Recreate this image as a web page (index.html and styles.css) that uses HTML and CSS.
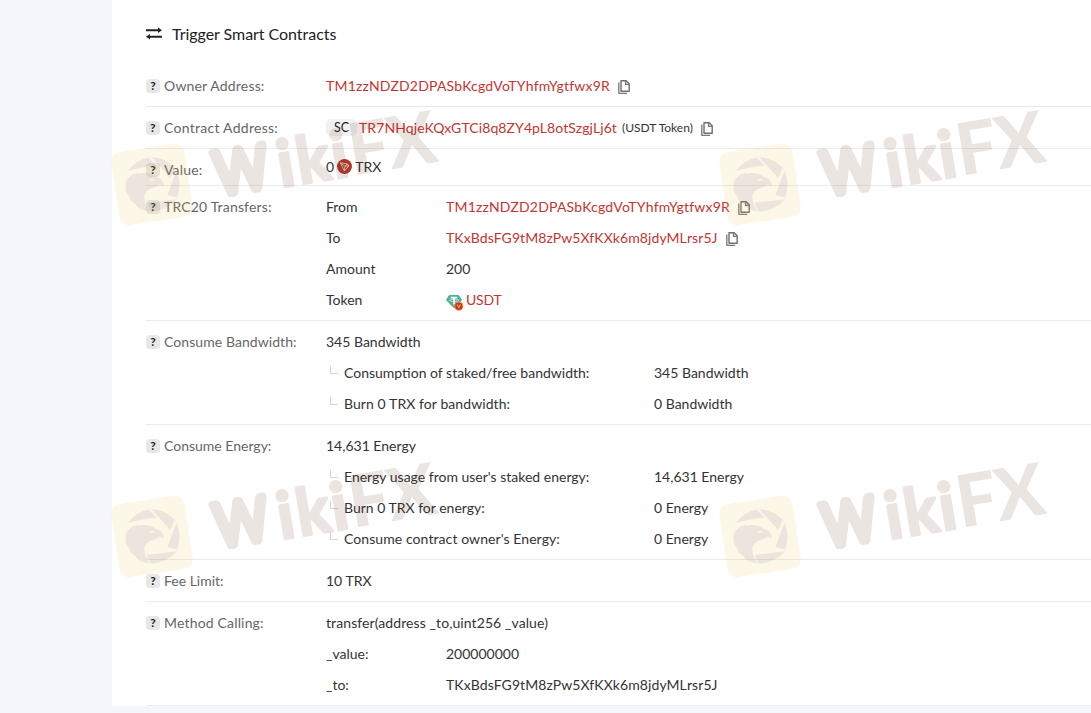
FILE: index.html
```
<!DOCTYPE html>
<html lang="en">
<head>
    <meta charset="UTF-8">
    <meta name="viewport" content="width=device-width, initial-scale=1.0">
    <title>Trigger Smart Contracts</title>
    <link rel="stylesheet" href="styles.css">
</head>
<body>
    <svg class="defs" width="0" height="0">
        <symbol id="copy" viewBox="0 0 12 14">
            <path d="M3 .8h5.2l3 3v7.4H3z" fill="none" stroke="#707070" stroke-width="1.4" stroke-linejoin="round"/>
            <path d="M7.6 .8v3.6h3.6M.8 2.6v10.7h8.4" fill="none" stroke="#777" stroke-width="1.3" stroke-linejoin="round"/>
        </symbol>
    </svg>

    <div class="card">
        <div class="title">
            <svg width="16" height="13" viewBox="0 0 16 13">
                <path d="M0 3.2h13M3 9.8h13" stroke="#222" stroke-width="2"/>
                <path d="M12 .4L16 3.2l-4 2.8zM4 7L0 9.8l4 2.8z" fill="#222"/>
            </svg>
            <span>Trigger Smart Contracts</span>
        </div>

        <div class="row">
            <div class="label"><i>?</i>Owner Address:</div>
            <div class="content">
                <div class="line"><a class="wide">TM1zzNDZD2DPASbKcgdVoTYhfmYgtfwx9R</a><svg class="copy"><use href="#copy"/></svg></div>
            </div>
        </div>

        <div class="row">
            <div class="label contract"><i>?</i>Contract Address:</div>
            <div class="content">
                <div class="line"><span class="tag">SC</span><a>TR7NHqjeKQxGTCi8q8ZY4pL8otSzgjLj6t</a><small>(USDT Token)</small><svg class="copy"><use href="#copy"/></svg></div>
            </div>
        </div>

        <div class="row value">
            <div class="label"><i>?</i>Value:</div>
            <div class="content">
                <div class="line">0
                    <svg class="trx" width="15" height="15" viewBox="0 0 15 15">
                        <circle cx="7.5" cy="7.5" r="7.5" fill="#b0382b"/>
                        <path d="M3.4 3.8l6.6 1.1 1.9 1.8-4.5 5.4zM3.4 3.8l4.5 3.5-.5 4.8M7.9 7.3l2.1-2.4M7.9 7.3l4-.6" fill="none" stroke="#f3d5cf" stroke-width=".8"/>
                    </svg>
                    TRX</div>
            </div>
        </div>

        <div class="row">
            <div class="label"><i>?</i>TRC20 Transfers:</div>
            <div class="content">
                <div class="line"><span class="key">From</span><a class="wide">TM1zzNDZD2DPASbKcgdVoTYhfmYgtfwx9R</a><svg class="copy"><use href="#copy"/></svg></div>
                <div class="line"><span class="key">To</span><a>TKxBdsFG9tM8zPw5XfKXk6m8jdyMLrsr5J</a><svg class="copy"><use href="#copy"/></svg></div>
                <div class="line"><span class="key">Amount</span>200</div>
                <div class="line"><span class="key">Token</span>
                    <svg class="usdt" width="18" height="18" viewBox="0 0 18 18">
                        <path d="M3.2 2.5h9.4l2.9 4.5L8 14.8.5 7z" fill="#50af95" stroke="#50af95" stroke-width="1" stroke-linejoin="round"/>
                        <path d="M4.8 4.5h6.4M8 4.5v7" stroke="#fff" stroke-width="1.6"/>
                        <ellipse cx="8" cy="7.2" rx="4.6" ry="1.3" fill="none" stroke="#fff" stroke-width=".7"/>
                        <circle cx="12.8" cy="13.2" r="4.1" fill="#c23631" stroke="#f0a33c" stroke-width=".9"/>
                        <path d="M11.2 11.4l1.6 3.4 1.6-3.4" fill="none" stroke="#ffb03d" stroke-width="1"/>
                    </svg>
                    <a class="token">USDT</a></div>
            </div>
        </div>

        <div class="row">
            <div class="label bandwidth"><i>?</i>Consume Bandwidth:</div>
            <div class="content">
                <div class="line">345 Bandwidth</div>
                <div class="line sub"><span class="name">Consumption of staked/free bandwidth:</span>345 Bandwidth</div>
                <div class="line sub"><span class="name burn">Burn 0 TRX for bandwidth:</span>0 Bandwidth</div>
            </div>
        </div>

        <div class="row">
            <div class="label energy"><i>?</i>Consume Energy:</div>
            <div class="content">
                <div class="line">14,631 Energy</div>
                <div class="line sub"><span class="name">Energy usage from user's staked energy:</span>14,631 Energy</div>
                <div class="line sub"><span class="name">Burn 0 TRX for energy:</span>0 Energy</div>
                <div class="line sub"><span class="name burn">Consume contract owner's Energy:</span>0 Energy</div>
            </div>
        </div>

        <div class="row">
            <div class="label energy"><i>?</i>Fee Limit:</div>
            <div class="content">
                <div class="line">10 TRX</div>
            </div>
        </div>

        <div class="row">
            <div class="label"><i>?</i>Method Calling:</div>
            <div class="content">
                <div class="line method">transfer(address _to,uint256 _value)</div>
                <div class="line"><span class="key">_value:</span>200000000</div>
                <div class="line"><span class="key">_to:</span><span class="method">TKxBdsFG9tM8zPw5XfKXk6m8jdyMLrsr5J</span></div>
            </div>
        </div>
    </div>

    <!-- watermark layer -->
    <svg class="watermark" width="1091" height="713">
        <g id="mark" transform="translate(110 107.5)">
            <rect x="5" y="40" width="74" height="74" rx="10" transform="rotate(-8.5 42 77)" fill="#f2c34b" opacity=".13"/>
            <g transform="translate(-2 32.5) scale(.3333)" fill="#6f6a90" opacity=".12">
                <path d="M61 92Q82 59 123 53L146 77Q100 80 61 92Z"/>
                <path d="M131 52Q171 53 200 83L187 114Z"/>
                <path d="M206 92Q222 131 207 172L178 166Z"/>
                <path d="M129 187L206 178Q180 212 130 215Q118 203 117 188Z"/>
                <path d="M52 130Q62 104 92 97L86 102Q124 94 143 110Q168 116 168 140Q157 130 144 141Q117 146 109 165Q108 193 124 214Q99 212 82 196L88 195Q70 188 62 172L69 174Q54 160 51 145L57 149Q50 140 52 130Z"/>
                <path d="M122 119Q132 124 143 120Q138 113 122 119Z" fill="#fff3c0"/>
            </g>
            <g transform="translate(120 90) rotate(-9.5)" opacity=".12">
                <text class="mark-w" x="-11.5" y="-4" textLength="54" lengthAdjust="spacingAndGlyphs">W</text>
                <g class="mark-round">
                    <text x="52" y="-1.5">i</text>
                    <text x="71.5" y="-1.5" textLength="33" lengthAdjust="spacingAndGlyphs">k</text>
                    <text x="106.5" y="-1.5">i</text>
                </g>
                <g class="mark-black">
                    <text x="124.5" y="-1">F</text>
                    <text x="164" y="-1">X</text>
                </g>
            </g>
        </g>
        <use href="#mark" x="608" y="0"/>
        <use href="#mark" x="0" y="352"/>
        <use href="#mark" x="608" y="352"/>
    </svg>
</body>
</html>
```

FILE: styles.css
```
body {
    margin: 0;
    height: 713px;
    overflow: hidden;
    background: #f5f6fb;
    font-family: Lato, "Open Sans", sans-serif;
    font-size: 14px;
    color: #333;
}

.defs {
    display: block;
}

.card {
    margin-left: 112px;
    padding-left: 34px;
    background: #fff;
}

.title {
    display: flex;
    align-items: center;
    gap: 10px;
    height: 65px;
    padding-top: 2px;
    box-sizing: border-box;
    font-size: 16px;
    letter-spacing: -0.04px;
    color: #222;
}

.row {
    display: flex;
    padding: 5px 0;
    border-bottom: 1px solid #ebebeb;
}

.label {
    display: flex;
    align-items: center;
    width: 180px;
    height: 31px;
    letter-spacing: 0.17px;
    color: #666;
}

.contract {
    letter-spacing: 0.27px;
}

.bandwidth {
    letter-spacing: 0.07px;
}

.energy {
    letter-spacing: 0;
}

.label i {
    width: 14px;
    height: 14px;
    margin: 1px 4px 0 0;
    border-radius: 4px;
    background: #e7e7e7;
    color: #222;
    font-size: 12px;
    font-style: normal;
    font-weight: bold;
    line-height: 14px;
    text-align: center;
}

.content {
    flex: 1;
}

.line {
    display: flex;
    align-items: center;
    height: 31px;
    white-space: nowrap;
}

.line a {
    color: #c23631;
    letter-spacing: 0.09px;
}

.line a.wide {
    letter-spacing: 0.2px;
}

.line a.token {
    letter-spacing: -0.2px;
}

.line small {
    margin-left: 5px;
    font-size: 12px;
}

.copy {
    width: 12px;
    height: 14px;
    margin: 2px 0 0 8px;
}

.tag {
    width: 31px;
    height: 17px;
    margin-right: 2px;
    border-radius: 5px;
    background: #f1f1f1;
    color: #222;
    font-size: 12.5px;
    line-height: 17px;
    text-align: center;
}

.value {
    height: 26px;
}

.value .line {
    height: 24px;
}

.trx {
    margin: 1px 3px 0;
}

.usdt {
    margin: 4px 2px 0 0;
}

.key {
    width: 120px;
}

.method {
    letter-spacing: 0.09px;
}

.sub::before {
    content: "";
    width: 7px;
    height: 7px;
    margin: 0 6px 5px 4px;
    border-left: 1px solid #d5d5d5;
    border-bottom: 1px solid #d5d5d5;
}

.name {
    width: 310px;
}

.burn {
    letter-spacing: 0.08px;
}

.watermark {
    position: absolute;
    top: 0;
    left: 0;
    pointer-events: none;
}

.mark-w {
    font-size: 60px;
    fill: #612f1e;
    stroke: #612f1e;
    stroke-width: 7.5px;
    stroke-linejoin: round;
}

.mark-round {
    font-size: 65px;
    font-weight: bold;
    fill: #612f1e;
    stroke: #612f1e;
    stroke-width: 3px;
    stroke-linejoin: round;
}

.mark-black {
    font-size: 72px;
    font-weight: 900;
    fill: #612f1e;
}
```
